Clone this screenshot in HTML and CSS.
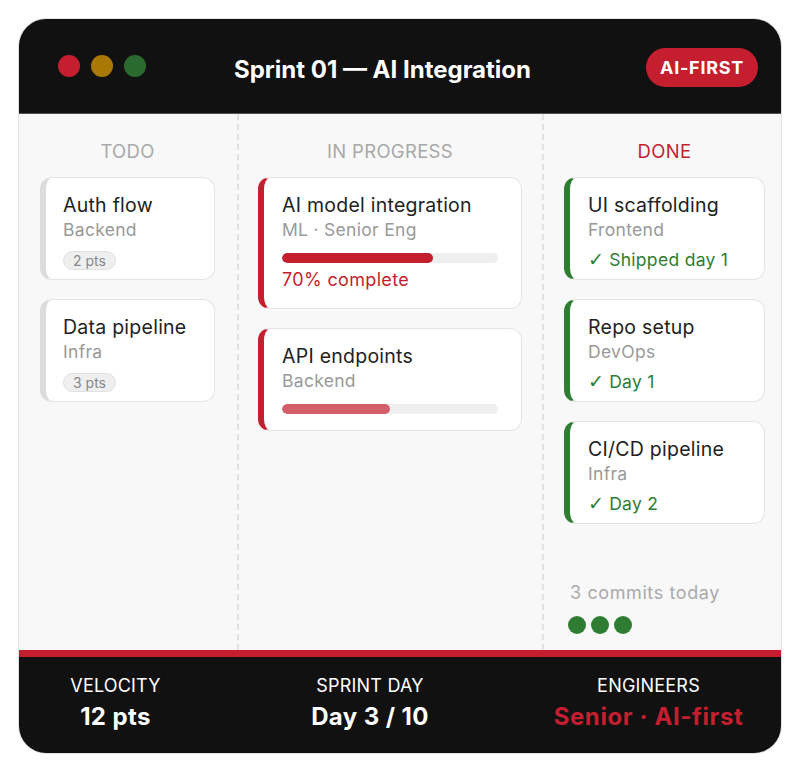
FILE: index.html
```html
<!DOCTYPE html>
<html>
<head>
<meta charset="utf-8">
<link rel="stylesheet" href="styles.css">
</head>
<body>
<div class="board">
  <header class="head">
    <div class="dots">
      <span class="dot red"></span>
      <span class="dot amber"></span>
      <span class="dot green"></span>
    </div>
    <h1 class="title">Sprint 01 — AI Integration</h1>
    <span class="badge">AI-FIRST</span>
  </header>
  <main class="cols">
    <section class="col col-todo">
      <h2 class="col-title">TODO</h2>
      <div class="card todo">
        <div class="c-title">Auth flow</div>
        <div class="c-sub">Backend</div>
        <div class="tagrow"><span class="tag">2 pts</span></div>
      </div>
      <div class="card todo">
        <div class="c-title">Data pipeline</div>
        <div class="c-sub">Infra</div>
        <div class="tagrow"><span class="tag">3 pts</span></div>
      </div>
    </section>
    <section class="col col-prog">
      <h2 class="col-title">IN PROGRESS</h2>
      <div class="card prog">
        <div class="c-title">AI model integration</div>
        <div class="c-sub">ML · Senior Eng</div>
        <div class="bar"><div class="fill" style="width:70%"></div></div>
        <div class="pct">70% complete</div>
      </div>
      <div class="card prog">
        <div class="c-title">API endpoints</div>
        <div class="c-sub">Backend</div>
        <div class="bar"><div class="fill light" style="width:50%"></div></div>
      </div>
    </section>
    <section class="col col-done">
      <h2 class="col-title done-title">DONE</h2>
      <div class="card done">
        <div class="c-title">UI scaffolding</div>
        <div class="c-sub">Frontend</div>
        <div class="check"><span class="tick">✓</span> Shipped day 1</div>
      </div>
      <div class="card done">
        <div class="c-title">Repo setup</div>
        <div class="c-sub">DevOps</div>
        <div class="check"><span class="tick">✓</span> Day 1</div>
      </div>
      <div class="card done">
        <div class="c-title">CI/CD pipeline</div>
        <div class="c-sub">Infra</div>
        <div class="check"><span class="tick">✓</span> Day 2</div>
      </div>
      <div class="commits">
        <div class="commits-label">3 commits today</div>
        <div class="commit-dots">
          <span class="cdot"></span><span class="cdot"></span><span class="cdot"></span>
        </div>
      </div>
    </section>
  </main>
  <footer class="foot">
    <div class="stat">
      <div class="s-label">VELOCITY</div>
      <div class="s-value">12 pts</div>
    </div>
    <div class="stat">
      <div class="s-label">SPRINT DAY</div>
      <div class="s-value">Day 3 / 10</div>
    </div>
    <div class="stat">
      <div class="s-label">ENGINEERS</div>
      <div class="s-value red-text">Senior · AI-first</div>
    </div>
  </footer>
</div>
</body>
</html>
```
FILE: styles.css
```css
* { box-sizing: border-box; }
html, body { margin: 0; padding: 0; background: #ffffff; }
body {
  font-family: "Inter", "Noto Sans", sans-serif;
  color: #222;
}
.board {
  margin: 18px;
  width: 764px;
  height: 736px;
  border: 1px solid #e2e2e2;
  border-radius: 28px;
  overflow: hidden;
  display: flex;
  flex-direction: column;
  background: #f8f8f8;
}
.head {
  height: 95px;
  flex: none;
  background: #111111;
  border-bottom: 1px solid #555;
  display: flex;
  align-items: center;
  padding: 0 23px 0 39px;
}
.dots { display: flex; gap: 11px; }
.dot { width: 22px; height: 22px; border-radius: 50%; display: block; }
.dot.red { background: #c41e2f; }
.dot.amber { background: #a97805; }
.dot.green { background: #2a6a2e; }
.title {
  margin: 7px 0 0 88px;
  font-size: 24px;
  font-weight: 700;
  color: #ffffff;
  line-height: 30px;
}
.badge {
  margin-left: auto;
  width: 112px;
  height: 39px;
  border-radius: 20px;
  background: #c41e2f;
  color: #fff;
  font-weight: 700;
  font-size: 18px;
  letter-spacing: 0.7px;
  display: flex;
  align-items: center;
  justify-content: center;
  margin-top: 2px;
}
.cols {
  flex: 1;
  display: grid;
  grid-template-columns: 218px 305px 1fr;
  background: #f8f8f8;
}
.col {
  display: flex;
  flex-direction: column;
  gap: 19px;
  padding: 24px 22px 16px 21px;
}
.col-prog, .col-done { border-left: 2px dashed #e2e2e2; }
.col-prog { padding: 24px 20px 16px 19px; }
.col-done { padding: 24px 16px 16px 20px; }
.col-title {
  margin: 0 0 -6px;
  text-align: center;
  font-size: 18.5px;
  font-weight: 400;
  line-height: 26px;
  letter-spacing: 0.3px;
  color: #a8a8a8;
}
.done-title { color: #c41e2f; }
.card {
  background: #fff;
  border: 1px solid #e4e4e4;
  border-left: 6px solid #dcdcdc;
  border-radius: 12px;
  padding: 14px 20px 10px 17px;
}
.card.prog { border-left-color: #c41e2f; padding-bottom: 16px; padding-left: 18px; }
.card.done { border-left-color: #2e7d32; padding-bottom: 7px; padding-left: 18px; }
.c-title { font-size: 19.5px; line-height: 26px; letter-spacing: 0.25px; color: #222; white-space: nowrap; }
.c-sub { font-size: 17.5px; line-height: 24px; letter-spacing: 0.3px; color: #999; white-space: nowrap; }
.tagrow { margin-top: 9px; height: 18px; display: flex; }
.tag {
  height: 19px;
  padding: 0 9px;
  border-radius: 10px;
  background: #efefef;
  border: 1px solid #e0e0e0;
  font-size: 14px;
  line-height: 17px;
  color: #888;
}
.bar {
  margin-top: 11px;
  height: 10px;
  border-radius: 5px;
  background: #efefef;
  overflow: hidden;
  margin-right: 3px;
}
.fill { height: 100%; border-radius: 5px; background: #c41e2f; }
.fill.light { background: #d45f6a; }
.pct { margin-top: 5px; font-size: 18px; line-height: 24px; letter-spacing: 0.35px; color: #c41e2f; }
.check { margin-top: 6px; height: 24px; font-size: 17.5px; line-height: 24px; letter-spacing: 0.3px; color: #2e7d32; white-space: nowrap; }
.tick { font-family: "DejaVu Sans", sans-serif; font-size: 19px; line-height: 0; letter-spacing: 0; }
.commits { margin-top: auto; padding-left: 6px; }
.commits-label { font-size: 18px; line-height: 24px; letter-spacing: 0.6px; color: #aaa; white-space: nowrap; margin-bottom: 1px; }
.commit-dots { display: flex; gap: 5px; margin-top: 11px; margin-left: -2px; }
.cdot { width: 18px; height: 18px; border-radius: 50%; background: #2e7d32; display: block; }
.foot {
  height: 103px;
  flex: none;
  background: #111111;
  border-top: 7px solid #c41e2f;
  display: grid;
  grid-template-columns: 193px 316px 1fr;
  padding: 17px 12px 0 0;
}
.stat { text-align: center; }
.s-label { font-size: 18px; line-height: 24px; letter-spacing: 0.2px; color: #fff; }
.s-value { margin-top: 4px; font-size: 24px; line-height: 30px; font-weight: 700; letter-spacing: 0.4px; color: #fff; white-space: nowrap; }
.s-value.red-text { color: #c41e2f; letter-spacing: 0.6px; }
```
